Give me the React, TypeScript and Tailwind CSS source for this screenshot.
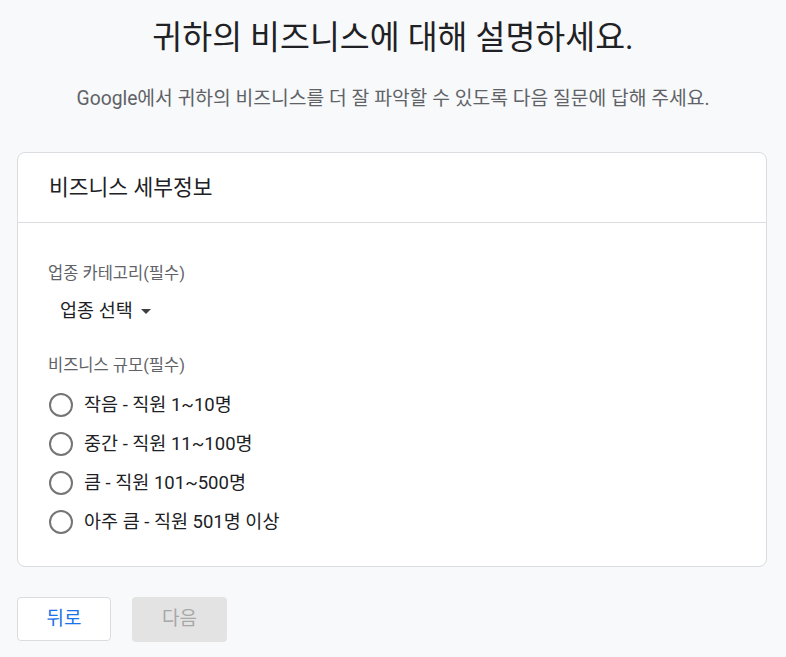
import React from 'react'

// ─── Types ────────────────────────────────────────────────────────────────────

interface SizeOption {
  id: string
  label: string
}

const SIZES: SizeOption[] = [
  { id: 'small', label: '작음 - 직원 1~10명' },
  { id: 'medium', label: '중간 - 직원 11~100명' },
  { id: 'large', label: '큼 - 직원 101~500명' },
  { id: 'xlarge', label: '아주 큼 - 직원 501명 이상' },
]

const FONT = "font-['Roboto','Noto_Sans_CJK_KR',sans-serif]"

// ─── Radio row ────────────────────────────────────────────────────────────────

function RadioRow({ option }: { option: SizeOption }) {
  return (
    <label className="flex items-center h-[39px] cursor-pointer">
      <span className="w-[24px] h-[24px] rounded-full border-2 border-[#757575] flex-shrink-0 ml-[1px]" />
      <span className="ml-[11px] text-[18.5px] leading-[24px] text-[#202124]">{option.label}</span>
    </label>
  )
}

// ─── App ──────────────────────────────────────────────────────────────────────

export default function App() {
  return (
    <div className={`${FONT} min-h-[657px] bg-[#f8f9fa] pb-[17px]`}>
      {/* ── Heading ───────────────────────────────────────────────────── */}
      <h1 className="pt-[14px] text-center text-[32.5px] leading-[48px] text-[#202124]">
        귀하의 비즈니스에 대해 설명하세요.
      </h1>
      <p className="mt-[25px] text-center text-[19.3px] leading-[24px] text-[#5f6368]">
        Google에서 귀하의 비즈니스를 더 잘 파악할 수 있도록 다음 질문에 답해 주세요.
      </p>

      {/* ── Card ──────────────────────────────────────────────────────── */}
      <section className="mt-[41px] ml-[17px] mr-[19px] bg-white border border-[#dadce0] rounded-[8px]">
        <div className="h-[70px] flex items-center px-[31px] border-b border-[#dadce0]">
          <h2 className="text-[21.5px] leading-[28px] text-[#202124]">비즈니스 세부정보</h2>
        </div>

        <div className="px-[30px] pt-[41px] pb-[25px]">
          <p className="text-[16.5px] leading-[20px] text-[#5f6368]">업종 카테고리(필수)</p>
          <button className="mt-[15px] ml-[12px] flex items-center gap-[8px] text-[18.5px] leading-[24px] text-[#202124]">
            업종 선택
            <svg width="10" height="5" viewBox="0 0 10 5" aria-hidden="true">
              <path d="M0 0 L10 0 L5 5 Z" fill="#3c4043" />
            </svg>
          </button>

          <p className="mt-[33px] text-[16.5px] leading-[20px] text-[#5f6368]">비즈니스 규모(필수)</p>
          <div className="mt-[9px] flex flex-col">
            {SIZES.map((s) => (
              <RadioRow key={s.id} option={s} />
            ))}
          </div>
        </div>
      </section>

      {/* ── Actions ───────────────────────────────────────────────────── */}
      <div className="mt-[30px] px-[17px] flex gap-[21px]">
        <button className="w-[94px] h-[44px] rounded-[4px] bg-white border border-[#dadce0] text-[19px] text-[#1a73e8]">
          뒤로
        </button>
        <button
          disabled
          className="w-[95px] h-[45px] rounded-[4px] bg-[#e3e3e4] text-[19px] text-[#a8a8a8]"
        >
          다음
        </button>
      </div>
    </div>
  )
}
